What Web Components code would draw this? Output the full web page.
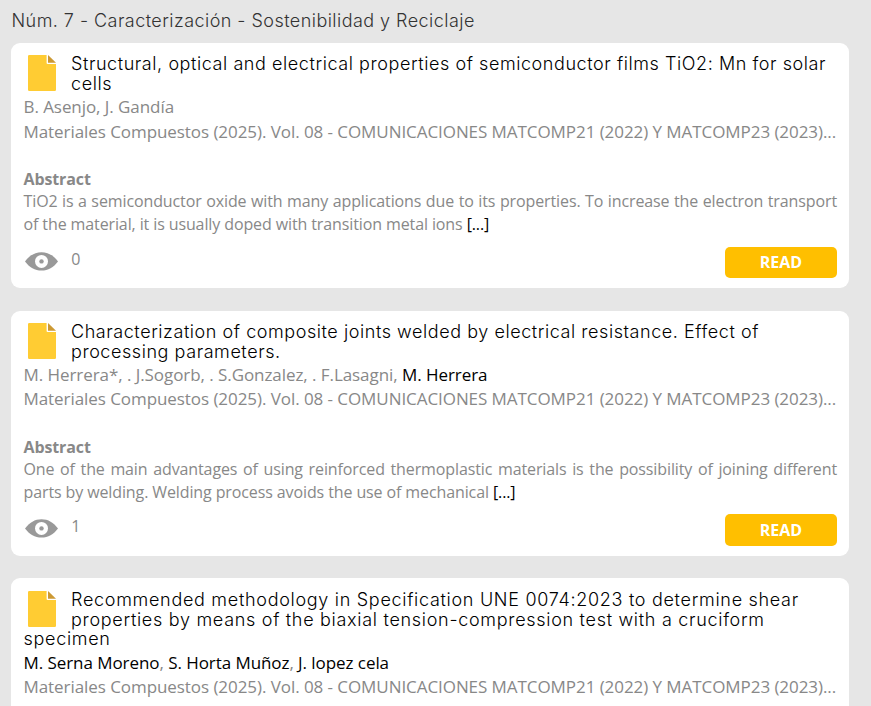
<!DOCTYPE html>
<html lang="es">
<head>
	<meta charset="utf-8">
	<title>Materiales Compuestos</title>
	<style>
		body {
			margin: 0;
			background: #e6e6e6;
			font-family: "Open Sans", "Noto Sans", sans-serif;
			color: #888;
			overflow: hidden;
		}
	</style>
</head>
<body>
	<issue-section heading="Núm. 7 - Caracterización - Sostenibilidad y Reciclaje"></issue-section>

<script>
const journal = "Materiales Compuestos (2025). Vol. 08 - COMUNICACIONES MATCOMP21 (2022) Y MATCOMP23 (2023)...";

const papers = [
	{
		title: "Structural, optical and electrical properties of semiconductor films TiO2: Mn for solar cells",
		spacing: "0.57px",
		authors: "B. Asenjo, J. Gandía",
		abstract: "TiO2 is a semiconductor oxide with many applications due to its properties. To increase the electron transport of the material, it is usually doped with transition metal ions",
		views: 0,
	},
	{
		title: "Characterization of composite joints welded by electrical resistance. Effect of processing parameters.",
		spacing: "0.56px",
		authors: "M. Herrera*, . J.Sogorb, . S.Gonzalez, . F.Lasagni, <b>M. Herrera</b>",
		abstract: "One of the main advantages of using reinforced thermoplastic materials is the possibility of joining different parts by welding. Welding process avoids the use of mechanical",
		views: 1,
	},
	{
		title: "Recommended methodology in Specification UNE 0074:2023 to determine shear properties by means of the biaxial tension-compression test with a cruciform specimen",
		spacing: "0.7px",
		authors: "<b>M. Serna Moreno</b>, <b>S. Horta Muñoz</b>, <b>J. lopez cela</b>",
	},
];

class FileIcon extends HTMLElement {
	constructor() {
		super();
		this.attachShadow({ mode: "open" }).innerHTML = `
		<style>
		:host {
			display: block;
			width: 28px;
			height: 36px;
		}
		svg { display: block; }
		</style>
		<svg width="28" height="36" viewBox="0 0 28 36">
			<path fill="#fc3" d="M1.2 0H18.6V7.9Q18.6 9 19.7 9H28V34.8Q28 36 26.8 36H1.2Q0 36 0 34.8V1.2Q0 0 1.2 0Z"/>
			<path fill="#cc9933" d="M20 0L28 7.8H20Z"/>
		</svg>`;
	}
}
customElements.define("file-icon", FileIcon);

class ViewCount extends HTMLElement {
	constructor() {
		super();
		this.attachShadow({ mode: "open" }).innerHTML = `
		<style>
		:host {
			display: flex;
			align-items: flex-start;
			gap: 13px;
			font-size: 16px;
			line-height: 24px;
		}
		svg { margin: 5px 0 0 1.8px; }
		</style>
		<svg width="33" height="19" viewBox="0 0 33 19">
			<path fill="#999" d="M0 9.5C4.5 3.5 9.8.2 16.5.2S28.5 3.5 33 9.5C28.5 15.5 23.2 18.6 16.5 18.6S4.5 15.5 0 9.5Z"/>
			<circle cx="16.5" cy="9.4" r="6.5" fill="#fff"/>
			<circle cx="16.5" cy="9.4" r="2.2" fill="#999"/>
		</svg>
		<span><slot></slot></span>`;
	}
}
customElements.define("view-count", ViewCount);

class ReadButton extends HTMLElement {
	constructor() {
		super();
		this.attachShadow({ mode: "open" }).innerHTML = `
		<style>
		:host { display: block; }
		button {
			display: block;
			width: 112px;
			height: 31.4px;
			padding: 0;
			border: 0;
			border-radius: 5px;
			background: #ffbf00;
			color: #fff;
			font: bold 16px/30px "Open Sans", "Noto Sans", sans-serif;
			cursor: pointer;
		}
		</style>
		<button><slot></slot></button>`;
	}
}
customElements.define("read-button", ReadButton);

class PaperCard extends HTMLElement {
	constructor() {
		super();
		this.shadowDOM = this.attachShadow({ mode: "open" });
	}
	set paper(paper) {
		this._paper = paper;
		this.render();
	}

	render() {
		this.shadowDOM.innerHTML = `
		<style>
		* {
			margin: 0;
			padding: 0;
			box-sizing: border-box;
		}

		:host {
			display: block;
			box-sizing: border-box;
			height: 245px;
			padding: 11.4px 12px 10px 12.5px;
			border-radius: 9px;
			background: #fff;
		}

		file-icon {
			float: left;
			margin: 1px 15px 0 4.5px;
		}

		h2 {
			font-family: Inter, sans-serif;
			font-size: 18px;
			font-weight: 350;
			line-height: 19.8px;
			letter-spacing: ${this._paper.spacing};
			color: #000;
		}

		.authors, .journal {
			clear: both;
			font-size: 17px;
			line-height: 24.28px;
			letter-spacing: -0.065px;
			white-space: nowrap;
		}

		.authors { padding-top: 1.4px; }

		.authors b {
			font-weight: normal;
			color: #000;
		}

		.abstract {
			margin-top: 23.9px;
			font-size: 16px;
			line-height: 22.86px;
			letter-spacing: -0.11px;
		}

		.abstract p {
			margin-top: -0.3px;
			text-align: justify;
		}

		.abstract a { color: #000; }

		footer {
			display: flex;
			justify-content: space-between;
			margin-top: 10.4px;
		}
		</style>
		<file-icon></file-icon>
		<h2>${this._paper.title}</h2>
		<p class="authors">${this._paper.authors}</p>
		<p class="journal">${journal}</p>
		${this._paper.abstract ? this.renderAbstract() : ""}`;
	}

	renderAbstract() {
		return `
		<div class="abstract">
			<h4>Abstract</h4>
			<p>${this._paper.abstract} <a>[...]</a></p>
		</div>
		<footer>
			<view-count>${this._paper.views}</view-count>
			<read-button>READ</read-button>
		</footer>`;
	}
}
customElements.define("paper-card", PaperCard);

class IssueSection extends HTMLElement {
	connectedCallback() {
		const root = this.attachShadow({ mode: "open" });
		root.innerHTML = `
		<style>
		:host {
			display: flex;
			flex-direction: column;
			gap: 22.7px;
			box-sizing: border-box;
			height: 706px;
			padding: 10px 22px 0 11px;
			overflow: hidden;
		}

		h1 {
			margin: 0 0 -12.7px;
			padding-bottom: 1px;
			font: 350 18px/22px Inter, sans-serif;
			letter-spacing: 0.45px;
			text-indent: 0.5px;
			color: #333;
		}

		paper-card { flex: none; }
		</style>
		<h1>${this.getAttribute("heading")}</h1>`;
		papers.forEach(paper => {
			const card = document.createElement("paper-card");
			card.paper = paper;
			root.appendChild(card);
		});
	}
}
customElements.define("issue-section", IssueSection);
</script>
</body>
</html>
